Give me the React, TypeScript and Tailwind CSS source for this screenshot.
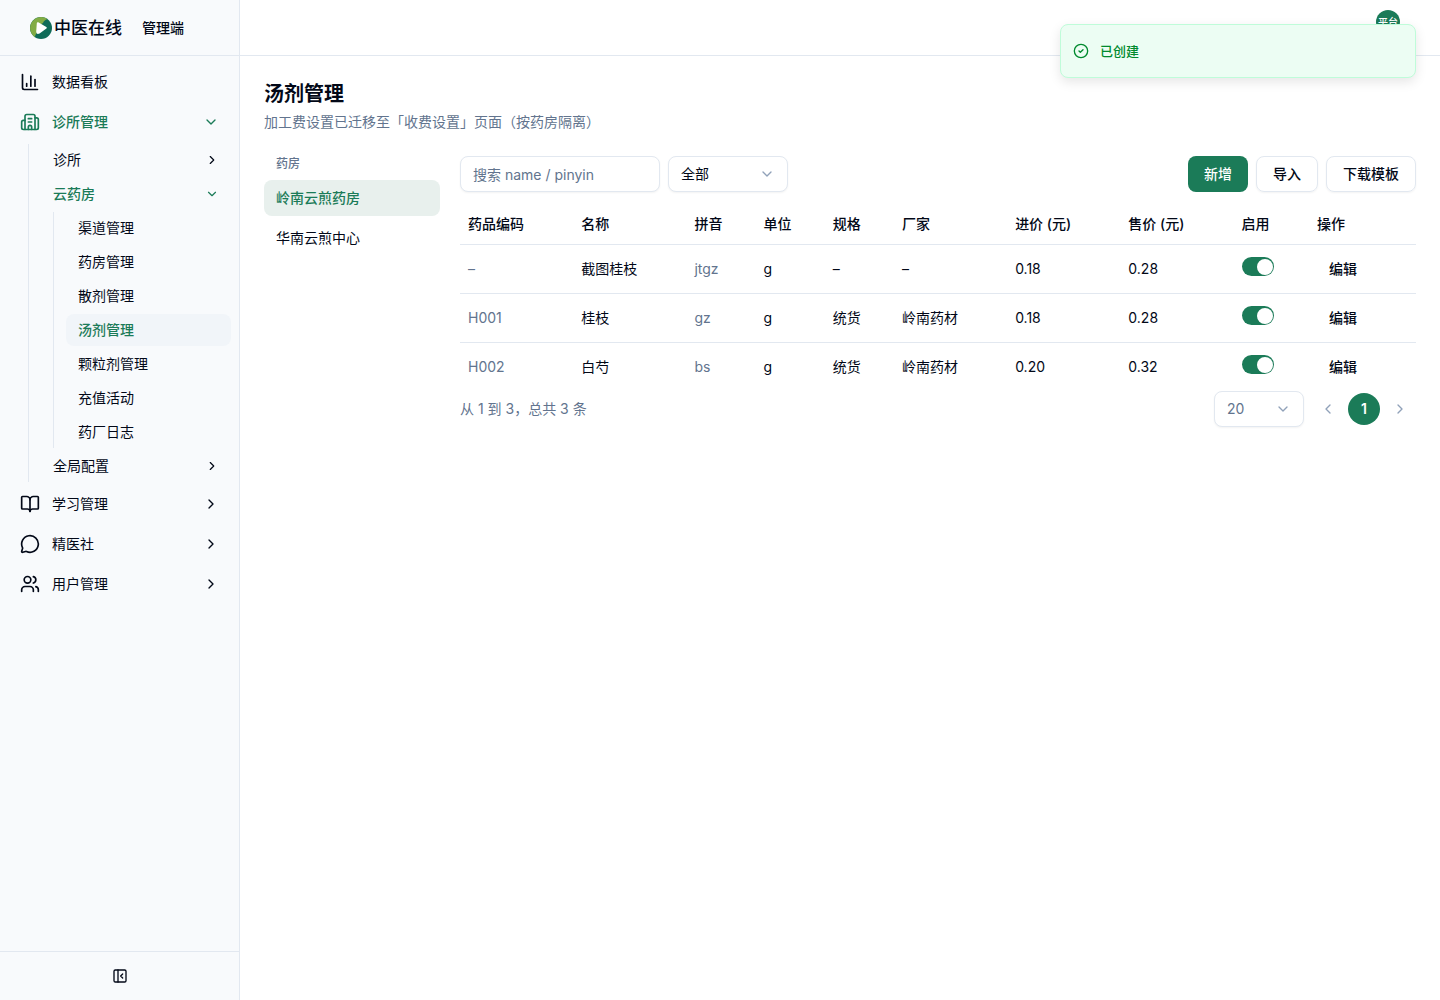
import {
  BookOpen,
  Building2,
  ChartColumn,
  ChevronDown,
  ChevronLeft,
  ChevronRight,
  CircleCheck,
  MessageCircle,
  PanelLeftClose,
  Users,
} from 'lucide-react'

const CLOUD_PHARMACY = ['渠道管理', '药房管理', '散剂管理', '汤剂管理', '颗粒剂管理', '充值活动', '药厂日志']

const SECTIONS = [
  { name: '学习管理', icon: BookOpen },
  { name: '精医社', icon: MessageCircle },
  { name: '用户管理', icon: Users },
]

const PHARMACIES = ['岭南云煎药房', '华南云煎中心']

const COLUMNS = [
  { title: '药品编码', size: 180 },
  { title: '名称', size: 180 },
  { title: '拼音', size: 110 },
  { title: '单位', size: 110 },
  { title: '规格', size: 110 },
  { title: '厂家', size: 180 },
  { title: '进价 (元)', size: 180 },
  { title: '售价 (元)', size: 180 },
  { title: '启用', size: 120 },
  { title: '操作', size: 170 },
]

const TOTAL_SIZE = COLUMNS.reduce((sum, col) => sum + col.size, 0)

const ROWS = [
  { code: '–', name: '截图桂枝', pinyin: 'jtgz', unit: 'g', spec: '–', maker: '–', cost: '0.18', price: '0.28' },
  { code: 'H001', name: '桂枝', pinyin: 'gz', unit: 'g', spec: '统货', maker: '岭南药材', cost: '0.18', price: '0.28' },
  { code: 'H002', name: '白芍', pinyin: 'bs', unit: 'g', spec: '统货', maker: '岭南药材', cost: '0.20', price: '0.32' },
]

function Logo() {
  return (
    <svg viewBox="0 0 22 22" className="size-[22px]" aria-hidden="true">
      <circle cx="11" cy="11" r="11" fill="#0f6b58" />
      <path d="M5 20.200A11 11 0 1 1 17.500 2.100C15 3 13.500 4.500 13 6L8 9L6.500 16.500C5.500 17.500 5 19 5 20.200Z" fill="#82ac45" />
      <path
        d="M7.800 6.200L15.800 10.800L9 15.600Q7.200 16.600 7.200 14.800Z"
        fill="#fff"
        stroke="#fff"
        strokeWidth="2"
        strokeLinejoin="round"
      />
    </svg>
  )
}

function Sidebar() {
  return (
    <aside className="flex w-60 shrink-0 flex-col border-r border-slate-200 bg-slate-50">
      <div className="flex h-14 items-center gap-5 border-b border-slate-200 pl-[30px]">
        <div className="flex items-center gap-0.5">
          <Logo />
          <span className="text-[17px] leading-6 font-medium">中医在线</span>
        </div>
        <span className="text-sm font-medium">管理端</span>
      </div>
      <nav className="flex flex-1 flex-col gap-1 p-2" aria-label="主导航">
        <a href="#dashboard" className="flex h-9 items-center gap-3 px-3">
          <ChartColumn className="size-5" />
          数据看板
        </a>
        <button type="button" className="flex h-9 items-center gap-3 px-3 font-medium text-[#1b7b58]">
          <Building2 className="size-5" />
          诊所管理
          <ChevronDown className="ml-auto size-4" />
        </button>
        <div className="ml-5 flex flex-col gap-0.5 border-l border-slate-200 pl-3">
          <button type="button" className="flex h-8 items-center justify-between px-3">
            诊所
            <ChevronRight className="size-3.5" />
          </button>
          <button type="button" className="flex h-8 items-center justify-between px-3 font-medium text-[#1b7b58]">
            云药房
            <ChevronDown className="size-3.5" />
          </button>
          <ul className="ml-3 flex flex-col gap-0.5 border-l border-slate-200 pl-3">
            {CLOUD_PHARMACY.map((item) => (
              <li key={item}>
                <a
                  href={`#${item}`}
                  className={`flex h-8 items-center rounded-lg px-3 ${item === '汤剂管理' ? 'bg-slate-100 font-medium text-[#1b7b58]' : ''}`}
                >
                  {item}
                </a>
              </li>
            ))}
          </ul>
          <button type="button" className="flex h-8 items-center justify-between px-3">
            全局配置
            <ChevronRight className="size-3.5" />
          </button>
        </div>
        {SECTIONS.map(({ name, icon: Icon }) => (
          <button key={name} type="button" className="flex h-9 items-center gap-3 px-3">
            <Icon className="size-5" />
            {name}
            <ChevronRight className="ml-auto size-4" />
          </button>
        ))}
      </nav>
      <div className="flex h-[49px] items-center justify-center border-t border-slate-200">
        <button type="button" aria-label="收起侧栏">
          <PanelLeftClose className="size-4" />
        </button>
      </div>
    </aside>
  )
}

function Toolbar() {
  return (
    <div className="flex gap-2">
      <input
        type="search"
        aria-label="搜索"
        placeholder="搜索 name / pinyin"
        className="h-9 w-[200px] rounded-lg border border-slate-200 bg-white px-3 shadow-xs placeholder:text-slate-500"
      />
      <div className="relative">
        <select aria-label="状态" className="h-9 w-[120px] appearance-none rounded-lg border border-slate-200 bg-white px-3 shadow-xs">
          <option>全部</option>
        </select>
        <ChevronDown className="pointer-events-none absolute top-2.5 right-[13px] size-4 text-slate-400" />
      </div>
      <div className="ml-auto flex gap-2 font-medium">
        <button type="button" className="h-9 rounded-lg bg-[#1b7b58] px-4 text-white">新增</button>
        <button type="button" className="h-9 rounded-lg border border-slate-200 px-4 shadow-xs">导入</button>
        <button type="button" className="h-9 rounded-lg border border-slate-200 px-4 shadow-xs">下载模板</button>
      </div>
    </div>
  )
}

function HerbTable() {
  return (
    <table className="mt-3 w-full table-fixed border-separate border-spacing-0 text-left">
      <thead>
        <tr className="h-[41px]">
          {COLUMNS.map((col) => (
            <th
              key={col.title}
              className="border-b border-slate-200 px-2 font-medium"
              style={{ width: `${(col.size / TOTAL_SIZE) * 100}%` }}
            >
              {col.title}
            </th>
          ))}
        </tr>
      </thead>
      <tbody>
        {ROWS.map((row) => (
          <tr key={row.name} className="h-[49px] last:h-12 *:border-b *:border-slate-200 *:px-2 last:*:border-b-0">
            <td className="text-slate-500">{row.code}</td>
            <td>{row.name}</td>
            <td className="text-slate-500">{row.pinyin}</td>
            <td>{row.unit}</td>
            <td>{row.spec}</td>
            <td>{row.maker}</td>
            <td>{row.cost}</td>
            <td>{row.price}</td>
            <td className="pt-3 align-top">
              <input
                type="checkbox"
                role="switch"
                defaultChecked
                aria-label={`启用 ${row.name}`}
                className="flex h-[19px] w-8 appearance-none items-center justify-end rounded-full bg-[#1b7b58] pr-px before:size-4 before:rounded-full before:bg-white"
              />
            </td>
            <td>
              <button type="button" className="h-8 px-3 font-medium">编辑</button>
            </td>
          </tr>
        ))}
      </tbody>
    </table>
  )
}

function Pagination() {
  return (
    <div className="flex items-center gap-2">
      <p className="mr-auto text-slate-500">从 1 到 3，总共 3 条</p>
      <div className="relative">
        <select aria-label="每页条数" className="h-9 w-[90px] appearance-none rounded-lg border border-slate-200 bg-white px-3 text-slate-500 shadow-xs">
          <option>20</option>
        </select>
        <ChevronDown className="pointer-events-none absolute top-2.5 right-[13px] size-4 text-slate-400" />
      </div>
      <div className="flex gap-1">
        <button type="button" aria-label="上一页" className="grid size-8 place-items-center text-slate-400">
          <ChevronLeft className="size-4" />
        </button>
        <button type="button" className="size-8 rounded-full bg-[#1b7b58] font-semibold text-white">1</button>
        <button type="button" aria-label="下一页" className="grid size-8 place-items-center text-slate-400">
          <ChevronRight className="size-4" />
        </button>
      </div>
    </div>
  )
}

function Toast() {
  return (
    <div
      role="status"
      className="absolute top-6 right-6 flex h-[54px] w-[356px] items-center gap-[11px] rounded-lg border border-[#bffcd9] bg-[#ecfdf3] px-3 text-[13px] font-medium text-[#008a2e] shadow-[0_4px_12px_rgba(0,0,0,0.1)]"
    >
      <CircleCheck className="size-4" />
      已创建
    </div>
  )
}

export default function App() {
  return (
    <div className="relative flex min-h-screen bg-white font-[Inter,'Noto_Sans_CJK_SC',sans-serif] text-sm text-[#020817]">
      <Sidebar />
      <div className="min-w-0 flex-1">
        <header className="flex h-14 justify-end border-b border-slate-200 pt-2.5 pr-10">
          <button type="button" className="size-6 rounded-full bg-[#1b7b58] text-[10px] font-medium text-white">平台</button>
        </header>
        <main className="p-6">
          <h1 className="text-xl leading-7 font-semibold">汤剂管理</h1>
          <p className="mt-1 text-slate-500">加工费设置已迁移至「收费设置」页面（按药房隔离）</p>
          <div className="mt-6 flex gap-5">
            <section className="w-44 shrink-0">
              <h2 className="mb-2 px-3 text-xs font-medium text-slate-500">药房</h2>
              <div className="flex flex-col gap-1">
                {PHARMACIES.map((name, i) => (
                  <button
                    key={name}
                    type="button"
                    className={`h-9 rounded-lg px-3 text-left ${i === 0 ? 'bg-[#e8f0ed] font-medium text-[#1b7b58]' : ''}`}
                  >
                    {name}
                  </button>
                ))}
              </div>
            </section>
            <section className="min-w-0 flex-1">
              <Toolbar />
              <HerbTable />
              <Pagination />
            </section>
          </div>
        </main>
      </div>
      <Toast />
    </div>
  )
}
